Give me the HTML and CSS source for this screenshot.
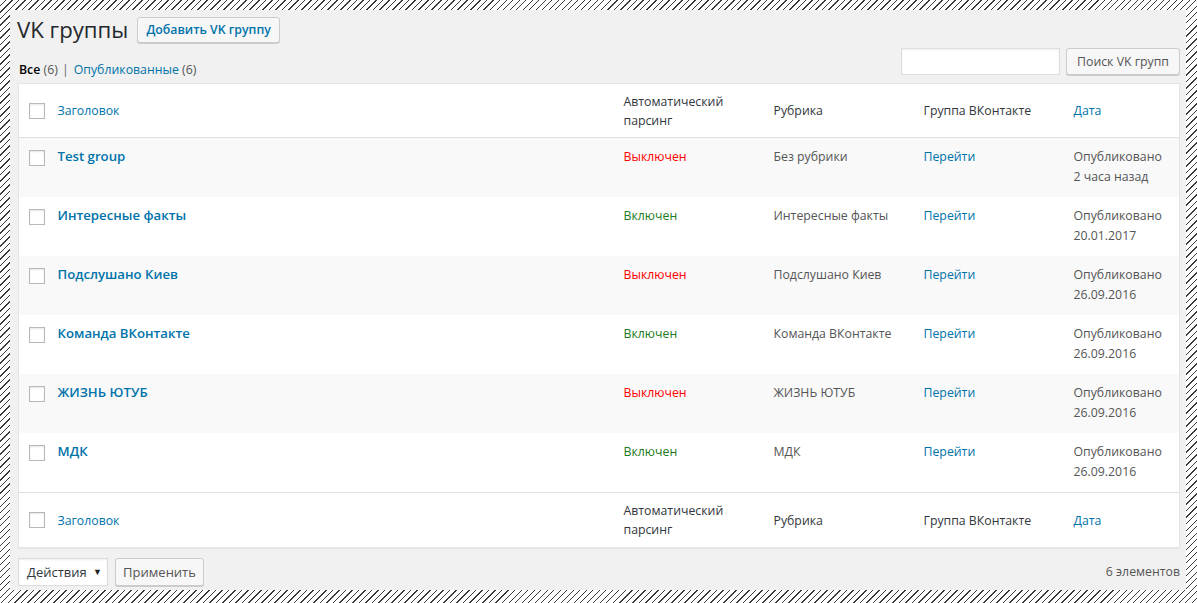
FILE: index.html
```html
<!DOCTYPE html>
<html lang="ru">

<head>
    <meta charset="UTF-8">
    <meta name="viewport" content="width=device-width, initial-scale=1.0">
    <title>VK группы</title>
    <link rel="stylesheet" href="styles.css">
</head>

<body>
    <div class="screen">
        <div class="page-head">
            <h1 class="page-title">VK группы</h1>
            <a class="btn btn-add" href="#">Добавить VK группу</a>
        </div>

        <div class="list-top">
            <ul class="views">
                <li><a class="current" href="#">Все <span class="count">(6)</span></a> <span class="sep">|</span></li>
                <li><a href="#">Опубликованные <span class="count">(6)</span></a></li>
            </ul>
            <form class="search-box">
                <input class="search-input" type="search">
                <button class="btn" type="button">Поиск VK групп</button>
            </form>
        </div>

        <table class="groups">
            <colgroup>
                <col class="col-cb">
                <col class="col-title">
                <col class="col-auto">
                <col class="col-rubric">
                <col class="col-group">
                <col class="col-date">
            </colgroup>
            <thead>
                <tr>
                    <th class="cell-cb"><input class="cb" type="checkbox"></th>
                    <th><a href="#">Заголовок</a></th>
                    <th>Автоматический<br>парсинг</th>
                    <th>Рубрика</th>
                    <th>Группа ВКонтакте</th>
                    <th><a href="#">Дата</a></th>
                </tr>
            </thead>
            <tbody>
                <tr>
                    <td class="cell-cb"><input class="cb" type="checkbox"></td>
                    <td><a class="row-title" href="#">Test group</a></td>
                    <td class="off">Выключен</td>
                    <td>Без рубрики</td>
                    <td><a href="#">Перейти</a></td>
                    <td>Опубликовано<br>2 часа назад</td>
                </tr>
                <tr>
                    <td class="cell-cb"><input class="cb" type="checkbox"></td>
                    <td><a class="row-title" href="#">Интересные факты</a></td>
                    <td class="on">Включен</td>
                    <td>Интересные факты</td>
                    <td><a href="#">Перейти</a></td>
                    <td>Опубликовано<br>20.01.2017</td>
                </tr>
                <tr>
                    <td class="cell-cb"><input class="cb" type="checkbox"></td>
                    <td><a class="row-title" href="#">Подслушано Киев</a></td>
                    <td class="off">Выключен</td>
                    <td>Подслушано Киев</td>
                    <td><a href="#">Перейти</a></td>
                    <td>Опубликовано<br>26.09.2016</td>
                </tr>
                <tr>
                    <td class="cell-cb"><input class="cb" type="checkbox"></td>
                    <td><a class="row-title" href="#">Команда ВКонтакте</a></td>
                    <td class="on">Включен</td>
                    <td>Команда ВКонтакте</td>
                    <td><a href="#">Перейти</a></td>
                    <td>Опубликовано<br>26.09.2016</td>
                </tr>
                <tr>
                    <td class="cell-cb"><input class="cb" type="checkbox"></td>
                    <td><a class="row-title" href="#">ЖИЗНЬ ЮТУБ</a></td>
                    <td class="off">Выключен</td>
                    <td>ЖИЗНЬ ЮТУБ</td>
                    <td><a href="#">Перейти</a></td>
                    <td>Опубликовано<br>26.09.2016</td>
                </tr>
                <tr>
                    <td class="cell-cb"><input class="cb" type="checkbox"></td>
                    <td><a class="row-title" href="#">МДК</a></td>
                    <td class="on">Включен</td>
                    <td>МДК</td>
                    <td><a href="#">Перейти</a></td>
                    <td>Опубликовано<br>26.09.2016</td>
                </tr>
            </tbody>
            <tfoot>
                <tr>
                    <th class="cell-cb"><input class="cb" type="checkbox"></th>
                    <th><a href="#">Заголовок</a></th>
                    <th>Автоматический<br>парсинг</th>
                    <th>Рубрика</th>
                    <th>Группа ВКонтакте</th>
                    <th><a href="#">Дата</a></th>
                </tr>
            </tfoot>
        </table>

        <div class="list-bottom">
            <div class="bulk-select">Действия</div>
            <button class="btn" type="button">Применить</button>
            <span class="items-count">6 элементов</span>
        </div>
    </div>
</body>

</html>
```

FILE: styles.css
```css
html,
body {
    margin: 0;
}

body {
    width: 1197px;
    height: 603px;
    overflow: hidden;
    background: repeating-linear-gradient(135deg, #fff 0, #fff 3.6px, #3a3a3a 3.6px, #3a3a3a 4.6px);
    font-family: "Open Sans", "Noto Sans", sans-serif;
    font-size: 12.3px;
    line-height: 19.5px;
    color: #444;
}

a {
    color: #0073aa;
    text-decoration: none;
}

.screen {
    box-sizing: border-box;
    width: 1176px;
    height: 580px;
    margin: 10px 11px 13px 10px;
    padding: 7px 6px 0 8px;
    background: #f1f1f1;
}

.page-head {
    display: flex;
    align-items: center;
    gap: 9px;
    height: 26px;
}

.page-title {
    margin: 0 0 0 -1px;
    font-size: 22.2px;
    font-weight: 400;
    line-height: 26px;
    color: #23282d;
}

.btn {
    box-sizing: border-box;
    display: inline-flex;
    align-items: center;
    height: 26px;
    padding: 0 8px;
    border: 1px solid #ccc;
    border-radius: 3px;
    background: #f7f7f7;
    box-shadow: 0 1px 0 #ccc;
    font-family: inherit;
    font-size: 12.3px;
    white-space: nowrap;
    color: #555;
    cursor: pointer;
}

.btn-add {
    font-weight: 600;
    color: #0073aa;
}

.list-top {
    display: flex;
    justify-content: space-between;
    align-items: flex-start;
    height: 27px;
    margin-top: 5px;
}

.views {
    display: flex;
    margin: 0;
    padding: 12px 0 0 1px;
    list-style: none;
    line-height: 20px;
    color: #666;
}

.views .current {
    font-weight: 600;
    color: #000;
}

.views .count {
    font-weight: 400;
    color: #555;
}

.sep {
    margin: 0 5px 0 1px;
}

.search-box {
    display: flex;
    gap: 6px;
    margin: 0;
}

.search-input {
    box-sizing: border-box;
    width: 159px;
    height: 27px;
    margin: 0;
    border: 1px solid #ddd;
    background: #fff;
    box-shadow: inset 0 1px 2px rgba(0, 0, 0, .07);
}

.search-box .btn {
    width: 114px;
    height: 27px;
    justify-content: center;
}

.groups {
    width: 1162px;
    margin-top: 8px;
    table-layout: fixed;
    border-collapse: collapse;
    border: 1px solid #e5e5e5;
    background: #fff;
    box-shadow: 0 1px 1px rgba(0, 0, 0, .04);
}

.col-cb {
    width: 29px;
}

.col-title {
    width: 566px;
}

.col-auto {
    width: 150px;
}

.col-rubric {
    width: 150px;
}

.col-group {
    width: 150px;
}

.groups th {
    padding: 7px 10px;
    height: 39px;
    font-weight: 400;
    text-align: left;
    line-height: 19px;
    color: #32373c;
    vertical-align: middle;
}

.groups tfoot th {
    height: 40px;
}

.groups thead tr {
    border-bottom: 1px solid #e1e1e1;
}

.groups tfoot tr {
    border-top: 1px solid #e1e1e1;
}

.groups td {
    height: 39px;
    padding: 9px 10px 11px;
    vertical-align: top;
    color: #555;
}

.groups tbody tr:nth-child(odd) {
    background: #f9f9f9;
}

.groups .cell-cb {
    padding: 0 0 0 10px;
}

.groups td.cell-cb {
    padding-top: 12px;
}

.cb {
    box-sizing: border-box;
    display: block;
    width: 16px;
    height: 16px;
    margin: 0;
    appearance: none;
    border: 1px solid #b4b9be;
    background: #fff;
    box-shadow: inset 0 1px 2px rgba(0, 0, 0, .1);
}

.row-title {
    font-size: 13.2px;
    font-weight: 600;
}

.groups td.off {
    color: #f00;
}

.groups td.on {
    color: #1b7a1b;
}

.list-bottom {
    display: flex;
    align-items: center;
    gap: 7px;
    margin-top: 10px;
}

.bulk-select {
    position: relative;
    box-sizing: border-box;
    width: 90px;
    height: 28px;
    padding: 0 8px;
    border: 1px solid #ddd;
    background: #fff;
    box-shadow: inset 0 1px 2px rgba(0, 0, 0, .07);
    line-height: 27px;
    font-size: 13px;
    color: #32373c;
}

.bulk-select::after {
    content: "▼";
    position: absolute;
    right: 5px;
    top: -1px;
    font-size: 9px;
    color: #222;
}

.list-bottom .btn {
    height: 28px;
    width: 89px;
    justify-content: center;
    font-size: 13px;
}

.items-count {
    margin-left: auto;
    color: #555;
}
```
